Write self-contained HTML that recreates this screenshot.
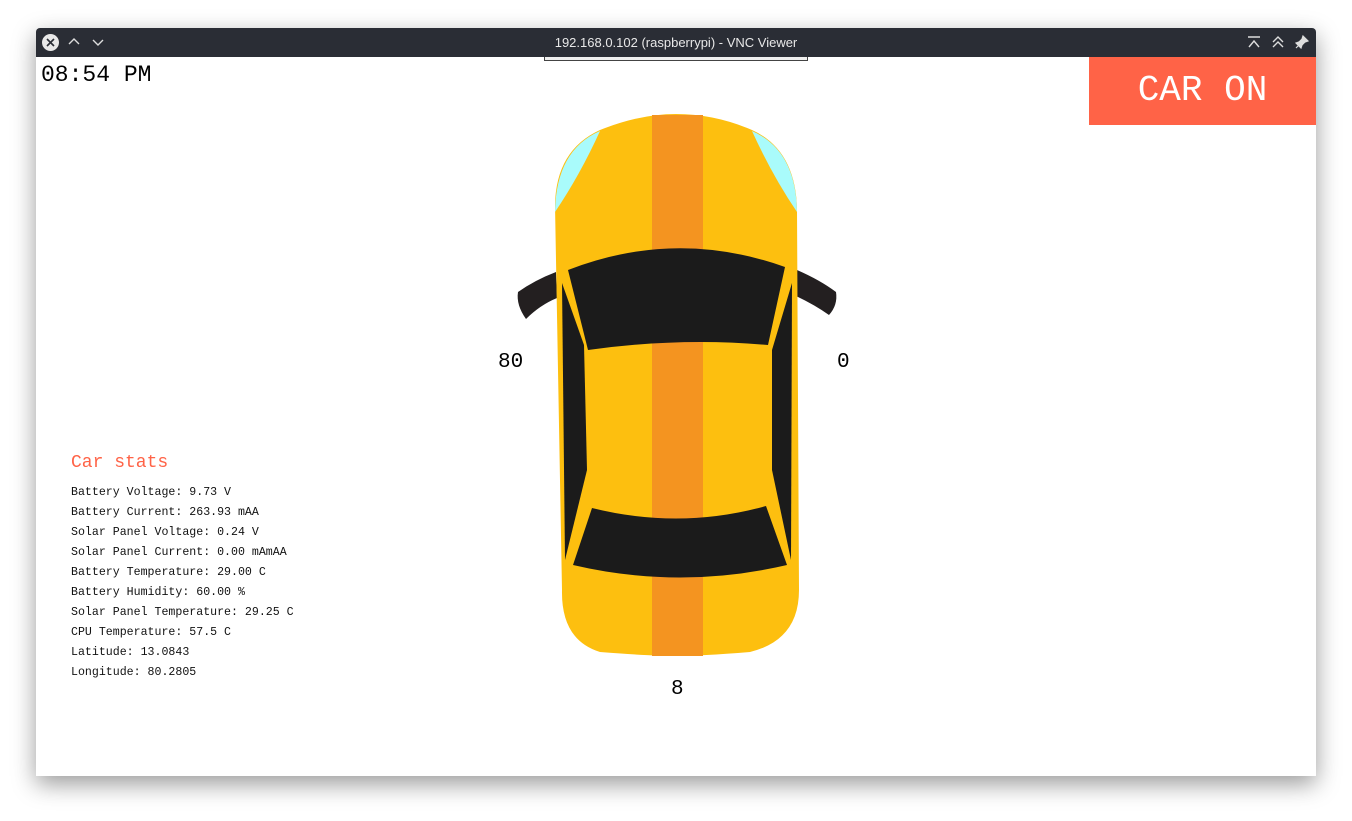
<!DOCTYPE html>
<html><head><meta charset="utf-8"><style>
body{margin:0;width:1352px;height:821px;background:#fff;position:relative;overflow:hidden;font-family:"Liberation Mono",monospace}
.win{position:absolute;left:36px;top:28px;width:1280px;height:748px;background:#fff;box-shadow:0 8px 24px rgba(0,0,0,.4);border-radius:4px 4px 0 0;overflow:hidden}
.tb{position:absolute;left:0;top:0;width:1280px;height:29px;background:#2a2d35;color:#e8e8e8;font:13px "Liberation Sans",sans-serif}
.t{position:absolute;color:#000}
.st{position:absolute;left:35px;font-size:11.6px;color:#111}
</style></head><body>
<div class="win">
<div class="tb">
<svg style="position:absolute;left:5px;top:5px" width="19" height="19"><circle cx="9.5" cy="9.5" r="8.5" fill="#e8e8e8"/><path d="M6 6L13 13M13 6L6 13" stroke="#2a2d35" stroke-width="1.6"/></svg>
<svg style="position:absolute;left:32px;top:9px" width="12" height="10"><path d="M1 7L6 2L11 7" stroke="#ddd" fill="none" stroke-width="1.4"/></svg>
<svg style="position:absolute;left:56px;top:9px" width="12" height="10"><path d="M1 3L6 8L11 3" stroke="#ddd" fill="none" stroke-width="1.4"/></svg>
<div style="position:absolute;left:0;width:1280px;top:7px;text-align:center">192.168.0.102 (raspberrypi) - VNC Viewer</div>
<svg style="position:absolute;left:1211px;top:7px" width="14" height="14"><path d="M1 2H13M2 12L7 6L12 12" stroke="#ddd" fill="none" stroke-width="1.4"/></svg>
<svg style="position:absolute;left:1235px;top:7px" width="14" height="14"><path d="M2 7L7 2L12 7M2 12L7 7L12 12" stroke="#ddd" fill="none" stroke-width="1.4"/></svg>
<svg style="position:absolute;left:1259px;top:7px" width="14" height="14"><path d="M8 1L13 6L10 7L7 10L6 13L1 8L4 7L7 4Z M4 10L1 13" stroke="#ddd" fill="#ddd" stroke-width="1.2"/></svg>
</div>
<div style="position:absolute;left:508px;top:29px;width:262px;height:3px;border:1px solid #444;border-top:none;background:#eee"></div>
<div class="t" style="left:5px;top:34px;font-size:23px">08:54 PM</div>
<div style="position:absolute;left:1053px;top:29px;width:227px;height:68px;background:#ff6347;color:#fff;font:36px 'Liberation Mono',monospace;text-align:center;line-height:68px">CAR ON</div>
<div class="t" style="left:462px;top:323px;font-size:21px">80</div>
<div class="t" style="left:801px;top:323px;font-size:21px">0</div>
<div class="t" style="left:635px;top:650px;font-size:21px">8</div>
<div style="position:absolute;left:35px;top:425px;font-size:18px;color:#ff6347">Car stats</div>
<div class="st" style="top:458px">Battery Voltage: 9.73 V</div>
<div class="st" style="top:478px">Battery Current: 263.93 mAA</div>
<div class="st" style="top:498px">Solar Panel Voltage: 0.24 V</div>
<div class="st" style="top:518px">Solar Panel Current: 0.00 mAmAA</div>
<div class="st" style="top:538px">Battery Temperature: 29.00 C</div>
<div class="st" style="top:558px">Battery Humidity: 60.00 %</div>
<div class="st" style="top:578px">Solar Panel Temperature: 29.25 C</div>
<div class="st" style="top:598px">CPU Temperature: 57.5 C</div>
<div class="st" style="top:618px">Latitude: 13.0843</div>
<div class="st" style="top:638px">Longitude: 80.2805</div>
<svg style="position:absolute;left:0;top:0" width="1280" height="748" viewBox="36 28 1280 748">
<path d="M518 292Q535 280 556 272L557 298Q540 305 526 319Q516 305 518 292Z" fill="#231f20"/>
<path d="M836 292Q820 280 797 270L796 296Q815 305 829 315Q838 305 836 292Z" fill="#231f20"/>
<path d="M555 205Q556 150 600 130Q640 114 676 114Q715 114 752 130Q796 150 797 210L799 590Q799 640 750 652Q700 656 676 656Q650 656 600 652Q561 640 562 590Z" fill="#fdbf0f"/>
<path d="M555 212Q556 150 600 131Q580 175 555 212Z" fill="#a9fbfb"/>
<path d="M797 212Q796 150 752 131Q772 175 797 212Z" fill="#a9fbfb"/>
<rect x="652" y="115" width="51" height="541" fill="#f49420"/>
<path d="M568 270Q676 228 785 267L768 345Q680 337 588 350Z" fill="#1b1b1b"/>
<path d="M562 283L584 345L587 470L565 560Z" fill="#1b1b1b"/>
<path d="M792 283L772 350L772 470L791 560Z" fill="#1b1b1b"/>
<path d="M592 508Q680 530 766 506L787 565Q680 590 573 565Z" fill="#1b1b1b"/>
</svg>
</div>
</body></html>
